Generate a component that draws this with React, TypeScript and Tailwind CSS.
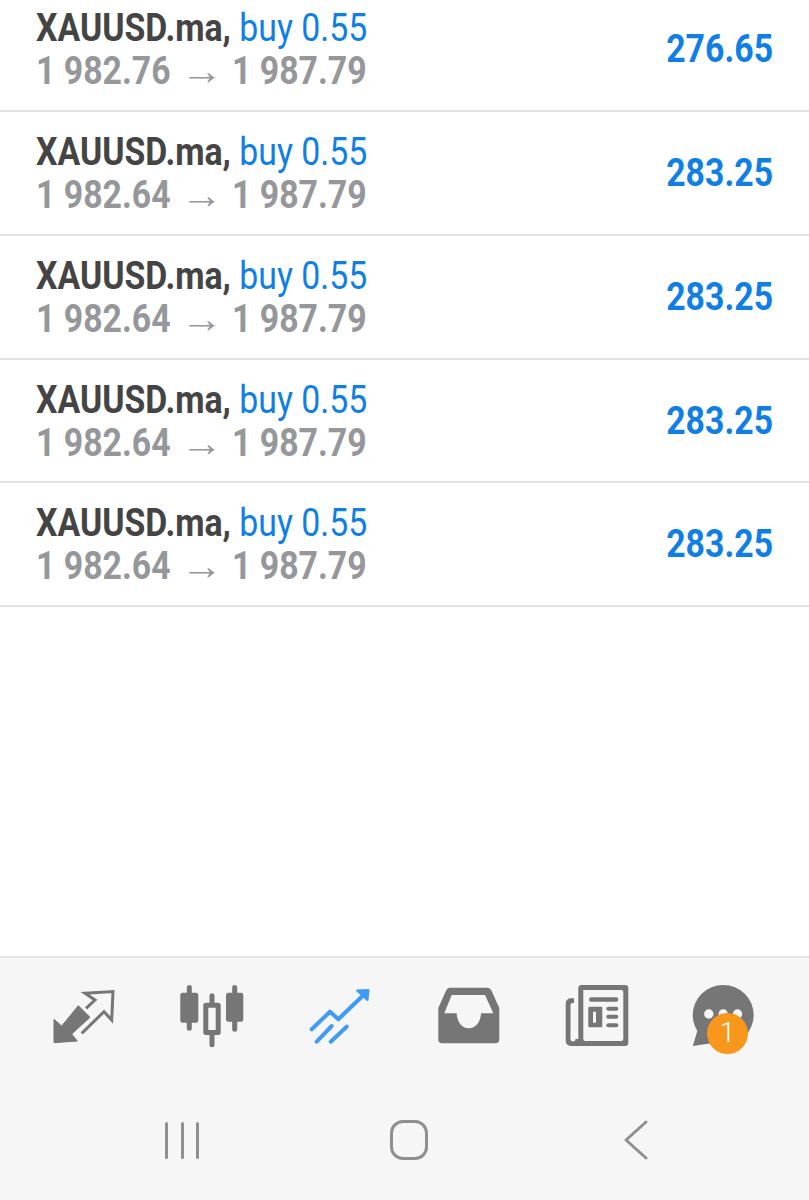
const trades = [
  { open: '1 982.76', close: '1 987.79', profit: '276.65' },
  { open: '1 982.64', close: '1 987.79', profit: '283.25' },
  { open: '1 982.64', close: '1 987.79', profit: '283.25' },
  { open: '1 982.64', close: '1 987.79', profit: '283.25' },
  { open: '1 982.64', close: '1 987.79', profit: '283.25' },
]

function TradeRow({ open, close, profit }: { open: string; close: string; profit: string }) {
  return (
    <div className="flex h-[123.85px] items-center justify-between border-b-2 border-[#e4e4e4] pl-[36px] pr-[36px] font-['Roboto',sans-serif] text-[38px] leading-[43px]">
      <div className="origin-left scale-x-[0.89] whitespace-nowrap pt-[2px]">
        <div>
          <span className="font-bold text-[#444444]">XAUUSD.ma,</span>{' '}
          <span className="text-[#0f7fe6]">buy 0.55</span>
        </div>
        <div className="font-bold text-[#96979a]">
          {open} <span className="mx-[6px] inline-block scale-x-[1.25] font-normal">→</span> {close}
        </div>
      </div>
      <div className="origin-right scale-x-[0.89] whitespace-nowrap pt-[1px] font-bold text-[#0f7fe6]">{profit}</div>
    </div>
  )
}

function TradeIcon() {
  return (
    <svg width="72" height="72" viewBox="0 0 72 72">
      <path d="M6 62.7V39.3L13.7 46L30.3 25.7L42 37.3L23.7 54L29.3 61Z" fill="#767676" stroke="#767676" strokeWidth="1" strokeLinejoin="round" />
      <path d="M38 28.3L47 20L37 13.3L65 11.5L63.7 40L56 31.7L33.7 53.3" fill="none" stroke="#767676" strokeWidth="3" />
    </svg>
  )
}

function CandlesIcon() {
  return (
    <svg width="72" height="72" viewBox="0 0 72 72" fill="#767676">
      <rect x="10.8" y="5" width="5" height="45.7" rx="2.5" />
      <rect x="4.3" y="12.7" width="18" height="30" rx="2.5" />
      <rect x="33.5" y="13.3" width="5" height="12" rx="2.5" />
      <rect x="33.5" y="52" width="5" height="15.3" rx="2.5" />
      <path fillRule="evenodd" d="M29.8 22.7H42.2A2.5 2.5 0 0 1 44.7 25.2V52.5A2.5 2.5 0 0 1 42.2 55H29.8A2.5 2.5 0 0 1 27.3 52.5V25.2A2.5 2.5 0 0 1 29.8 22.7ZM32.3 27.7V50H39.7V27.7Z" />
      <rect x="56.2" y="5" width="5" height="46.7" rx="2.5" />
      <rect x="50" y="12.7" width="17.3" height="29" rx="2.5" />
    </svg>
  )
}

function QuotesIcon() {
  return (
    <svg width="72" height="72" viewBox="0 0 72 72" fill="none" stroke="#3f9bf5" strokeWidth="4" strokeLinecap="round" strokeLinejoin="round">
      <path d="M7.7 49.3L26 31.7L34.3 39.3L60 14.5" />
      <path d="M53 10.5L64.5 10L63.5 20Z" fill="#3f9bf5" strokeWidth="2" />
      <path d="M12.7 61.7L27.7 46" />
      <path d="M26.7 61.7L42.7 46.7" />
    </svg>
  )
}

function InboxIcon() {
  return (
    <svg width="72" height="72" viewBox="0 0 72 72">
      <path
        fillRule="evenodd"
        fill="#767676"
        d="M17 7.7H54C56 7.7 57.5 8.7 58.5 10.7L66.3 28V59.5A3.8 3.8 0 0 1 62.5 63.3H9.1A3.8 3.8 0 0 1 5.3 59.5V28L13 10.7C14 8.7 15 7.7 17 7.7ZM18.7 15L11.3 33.3H23.7C24 42 29 48.3 35.8 48.3C42.6 48.3 47.7 42 48 33.3H60.3L52 15Z"
      />
    </svg>
  )
}

function NewsIcon() {
  return (
    <svg width="72" height="72" viewBox="0 0 72 72" fill="#767676">
      <path
        fillRule="evenodd"
        d="M20.3 5H64.3A3 3 0 0 1 67.3 8V63A3 3 0 0 1 64.3 66H9.7A5 5 0 0 1 4.7 61V23.3A5 5 0 0 1 9.7 18.3H13V23H11.5A2 2 0 0 0 9.5 25V59A2.5 2.5 0 0 0 12 61.5A2.5 2.5 0 0 0 14.5 59L17.3 59V8A3 3 0 0 1 20.3 5ZM22.3 10V59A2 2 0 0 0 24.3 61H60.3A2 2 0 0 0 62.3 59V12A2 2 0 0 0 60.3 10Z"
      />
      <rect x="28" y="17.3" width="29.3" height="4.4" rx="2.2" />
      <path fillRule="evenodd" d="M28.3 26.7H40.3A1 1 0 0 1 41.3 27.7V46.3A1 1 0 0 1 40.3 47.3H28.3A1 1 0 0 1 27.3 46.3V27.7A1 1 0 0 1 28.3 26.7ZM32 31.7V42.7H35V31.7Z" />
      <rect x="45.3" y="26.7" width="12" height="4" rx="2" />
      <rect x="45.3" y="34.7" width="12" height="4" rx="2" />
      <rect x="45.3" y="43.3" width="12" height="4" rx="2" />
    </svg>
  )
}

function ChatIcon() {
  return (
    <div className="relative h-[72px] w-[72px]">
      <svg width="72" height="72" viewBox="0 0 72 72">
        <ellipse cx="34.2" cy="35" rx="30.5" ry="30" fill="#767676" />
        <path d="M9.2 48L3.8 66L24.5 63Z" fill="#767676" />
        <circle cx="19.8" cy="34" r="4.7" fill="#f6f6f6" />
        <circle cx="34.2" cy="34" r="4.7" fill="#f6f6f6" />
        <circle cx="48.5" cy="34" r="4.7" fill="#f6f6f6" />
      </svg>
      <div className="absolute left-[18px] top-[33px] flex h-[41px] w-[41px] items-center justify-center rounded-full bg-[#f7981d] font-['Roboto',sans-serif] text-[27px] font-light text-white">
        1
      </div>
    </div>
  )
}

export default function App() {
  return (
    <div className="flex h-[1200px] flex-col overflow-hidden bg-white">
      <div className="-mt-[11.9px] flex-1">
        {trades.map((t, i) => (
          <TradeRow key={i} {...t} />
        ))}
      </div>
      <div className="h-[244px] border-t-2 border-[#e4e4e4] bg-[#f6f6f6]">
        <div className="grid grid-cols-6 justify-items-center px-[20px] pt-[22px]">
          <TradeIcon />
          <CandlesIcon />
          <QuotesIcon />
          <InboxIcon />
          <NewsIcon />
          <ChatIcon />
        </div>
        <div className="mt-[68px] grid grid-cols-3 justify-items-center pl-[69px] pr-[60px]">
          <div className="flex h-[40px] items-center gap-[12.5px]">
            <div className="h-[37px] w-[3px] rounded-full bg-[#8f8f8f]" />
            <div className="h-[37px] w-[3px] rounded-full bg-[#8f8f8f]" />
            <div className="h-[37px] w-[3px] rounded-full bg-[#8f8f8f]" />
          </div>
          <div className="h-[40px] w-[38px] rounded-[13px] border-[3px] border-[#8f8f8f]" />
          <svg width="24" height="40" viewBox="0 0 24 40" fill="none" stroke="#8f8f8f" strokeWidth="3" strokeLinecap="round" strokeLinejoin="round">
            <path d="M22 2L2 20L22 38" />
          </svg>
        </div>
      </div>
    </div>
  )
}
